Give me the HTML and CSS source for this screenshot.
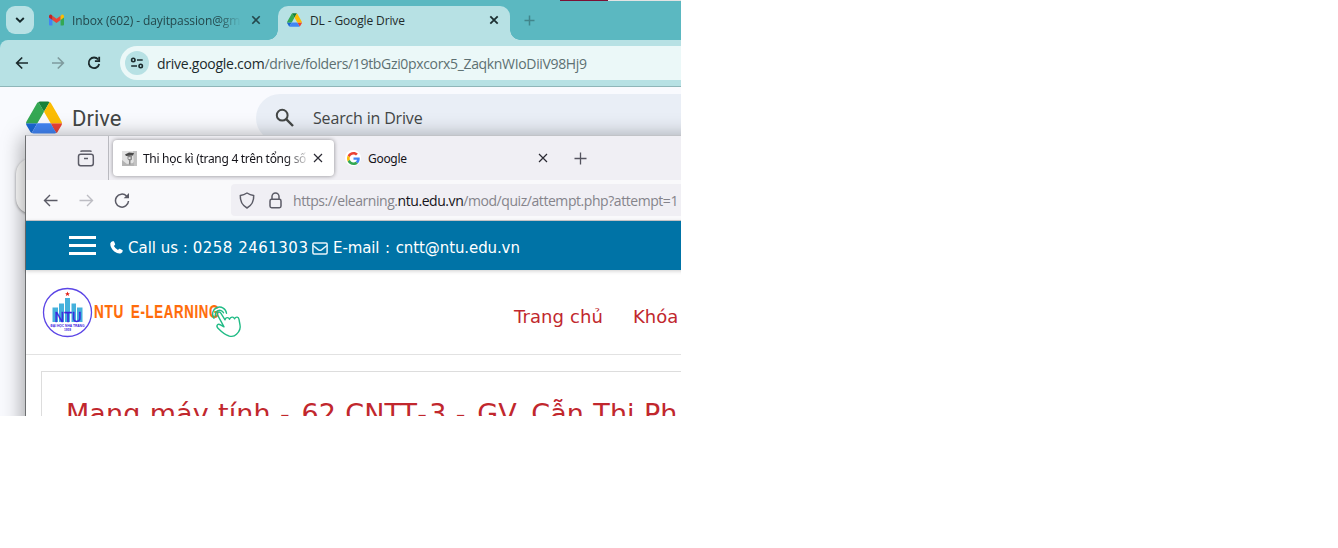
FILE: index.html
```html
<!DOCTYPE html>
<html lang="vi">
<head>
<meta charset="utf-8">
<title>DL - Google Drive</title>
<link rel="stylesheet" href="styles.css">
</head>
<body>
<svg width="0" height="0" class="defs">
  <symbol id="drive-logo" viewBox="0 0 87.3 78">
    <path d="m6.6 66.85 3.85 6.65c.8 1.4 1.95 2.5 3.3 3.3l13.75-23.8h-27.5c0 1.55.4 3.1 1.2 4.5z" fill="#1967d2"/>
    <path d="m43.65 25-13.75-23.8c-1.35.8-2.5 1.9-3.3 3.3l-25.4 44a9.06 9.06 0 0 0 -1.2 4.5h27.5z" fill="#34a853"/>
    <path d="m73.55 76.8c1.35-.8 2.5-1.9 3.3-3.3l1.6-2.75 7.65-13.25c.8-1.4 1.2-2.95 1.2-4.5h-27.5l5.85 11.5z" fill="#ea4335"/>
    <path d="m43.65 25 13.75-23.8c-1.35-.8-2.9-1.2-4.5-1.2h-18.5c-1.6 0-3.15.45-4.5 1.2z" fill="#188038"/>
    <path d="m59.8 53h-32.3l-13.75 23.8c1.35.8 2.9 1.2 4.5 1.2h50.8c1.6 0 3.15-.45 4.5-1.2z" fill="#4285f4"/>
    <path d="m73.4 26.5-12.7-22c-.8-1.4-1.95-2.5-3.3-3.3l-13.75 23.8 16.15 28h27.45c0-1.55-.4-3.1-1.2-4.5z" fill="#fbbc04"/>
  </symbol>
</svg>
<div class="desktop">
  <div class="top-edge"></div>

  <div class="chrome-tabs">
    <div class="tab-search"><svg width="10" height="8" viewBox="0 0 10 8"><path d="M1.200 2 5 5.700 8.800 2" fill="none" stroke="#16292b" stroke-width="1.900"/></svg></div>
    <div class="ctab">
      <svg class="gmail" width="15" height="12" viewBox="0 0 15 12">
        <path d="M0 2.500V10.500q0 1 1 1H3.400V5.200z" fill="#4285f4"/>
        <path d="M11.600 5.200V11.500H14q1 0 1-1V2.500z" fill="#34a853"/>
        <path d="M3.400 1.700V6L7.500 9 11.600 6V1.700L7.500 4.800z" fill="#ea4335"/>
        <path d="M0 2.500V3.600L3.400 6V1.700L2.600 1C1.500 0 0 .8 0 2.500z" fill="#c5221f"/>
        <path d="M15 2.500V3.600L11.600 6V1.700L12.400 1C13.500 0 15 .8 15 2.500z" fill="#fbbc04"/>
      </svg>
      <span class="ctab-title inbox">Inbox (602) - dayitpassion@gm</span>
      <svg class="cx" width="10" height="10" viewBox="0 0 10 10"><path d="M1.300 1.300 8.700 8.700M8.700 1.300 1.300 8.700" stroke="#24484c" stroke-width="1.600"/></svg>
    </div>
    <div class="ctab active">
      <svg class="mini-drive" width="15" height="14"><use href="#drive-logo"/></svg>
      <span class="ctab-title dl">DL - Google Drive</span>
      <svg class="cx" width="10" height="10" viewBox="0 0 10 10"><path d="M1.300 1.300 8.700 8.700M8.700 1.300 1.300 8.700" stroke="#1c2f31" stroke-width="1.800"/></svg>
    </div>
    <svg class="plus" width="11" height="11" viewBox="0 0 11 11"><path d="M5.500 .5V10.500M.5 5.500H10.500" stroke="#41858b" stroke-width="1.500"/></svg>
  </div>

  <div class="chrome-bar">
    <svg class="c-back" width="14" height="14" viewBox="0 0 14 14"><path d="M13 7H2M7.200 1.500 1.700 7l5.500 5.500" fill="none" stroke="#1b2a2c" stroke-width="1.700"/></svg>
    <svg class="c-fwd" width="14" height="14" viewBox="0 0 14 14"><path d="M1 7H12M6.800 1.500 12.300 7l-5.500 5.500" fill="none" stroke="#7f9b9e" stroke-width="1.700"/></svg>
    <svg class="c-reload" width="14" height="14" viewBox="0 0 14 14"><path d="M11.200 3.500A5.300 5.300 0 1 0 12.200 8" fill="none" stroke="#1b2a2c" stroke-width="1.800"/><path d="M12.200 .8V5.100H7.900" fill="none" stroke="#1b2a2c" stroke-width="1.800"/></svg>
    <div class="omnibox">
      <div class="site-info"><svg width="14" height="12" viewBox="0 0 14 12" fill="none" stroke="#1b2a2c" stroke-width="1.600"><circle cx="3.300" cy="3" r="1.700"/><path d="M7 3H12.700M1.200 9H7"/><circle cx="10.700" cy="9" r="1.700"/></svg></div>
      <span class="c-url"><b>drive.google.com</b>/drive/folders/19tbGzi0pxcorx5_ZaqknWIoDiiV98Hj9</span>
    </div>
  </div>

  <div class="drive-page">
    <svg class="big-drive" width="36" height="33"><use href="#drive-logo"/></svg>
    <span class="drive-name">Drive</span>
    <div class="drive-search">
      <svg width="20" height="20" viewBox="0 0 20 20" fill="none" stroke="#444746"><circle cx="7.200" cy="7.200" r="5.400" stroke-width="2"/><path d="M11.200 11.200 18 18" stroke-width="2.400"/></svg>
      <span>Search in Drive</span>
    </div>
    <div class="new-button"></div>
  </div>

  <div class="firefox">
    <div class="ff-tabs">
      <div class="ff-view">
        <svg width="18" height="17" viewBox="0 0 18 17" fill="none" stroke="#5b5b66" stroke-width="1.500"><path d="M3.500 1.700Q4 .9 5 .9H13Q14 .9 14.500 1.700" /><rect x="1.500" y="4.200" width="14.800" height="11.500" rx="2.200"/><path d="M7 8.500H11"/></svg>
      </div>
      <div class="ff-tab selected">
        <svg width="15" height="15" viewBox="0 0 15 15"><rect width="15" height="15" fill="#e2e2e2"/><path d="M0 9 5 13 11 12 15 5V15H0z" fill="#b4b4b4"/><path d="M11 0H15V15H12z" fill="#c3c3c3"/><path d="M3 3.500 7 1.500 12 2 11 4.500 4 5z" fill="#4a4a4a"/><path d="M5.500 5H10V8.500L8.500 9.500V13.500H7V9.500L5.500 8z" fill="#888"/><path d="M6.500 6.200H8.500V8H6.500z" fill="#e6e6e6"/></svg>
        <span class="ff-title quiz">Thi học kì (trang 4 trên tổng số 5</span>
        <svg class="fx" width="10" height="10" viewBox="0 0 10 10"><path d="M1 1 9 9M9 1 1 9" stroke="#2b2a33" stroke-width="1.200"/></svg>
      </div>
      <div class="ff-tab second">
        <div class="g-badge"><svg width="13" height="13" viewBox="0 0 48 48"><path fill="#EA4335" d="M24 9.500c3.540 0 6.710 1.220 9.210 3.600l6.850-6.850C35.900 2.380 30.470 0 24 0 14.620 0 6.510 5.380 2.560 13.220l7.980 6.190C12.430 13.720 17.740 9.500 24 9.500z"/><path fill="#4285F4" d="M46.980 24.550c0-1.570-.15-3.090-.38-4.550H24v9.020h12.940c-.58 2.960-2.260 5.480-4.780 7.180l7.730 6c4.510-4.180 7.090-10.360 7.090-17.650z"/><path fill="#FBBC05" d="M10.530 28.590c-.48-1.450-.76-2.990-.76-4.590s.27-3.140.76-4.590l-7.980-6.190C.92 16.460 0 20.120 0 24c0 3.880.92 7.540 2.560 10.780l7.970-6.190z"/><path fill="#34A853" d="M24 48c6.480 0 11.930-2.130 15.890-5.810l-7.730-6c-2.150 1.450-4.920 2.300-8.160 2.300-6.260 0-11.570-4.220-13.470-9.910l-7.980 6.190C6.510 42.620 14.620 48 24 48z"/></svg></div>
        <span class="ff-title goog">Google</span>
        <svg class="fx" width="10" height="10" viewBox="0 0 10 10"><path d="M1 1 9 9M9 1 1 9" stroke="#2b2a33" stroke-width="1.200"/></svg>
      </div>
      <svg class="fplus" width="13" height="13" viewBox="0 0 13 13"><path d="M6.500 .5V12.500M.5 6.500H12.500" stroke="#55545f" stroke-width="1.300"/></svg>
    </div>
    <div class="ff-bar">
      <svg class="f-back" width="15" height="13" viewBox="0 0 15 13"><path d="M14.500 6.500H1.500M7 1 1.500 6.500 7 12" fill="none" stroke="#5b5b66" stroke-width="1.400"/></svg>
      <svg class="f-fwd" width="15" height="13" viewBox="0 0 15 13"><path d="M.5 6.500H13.500M8 1 13.500 6.500 8 12" fill="none" stroke="#bdbdc3" stroke-width="1.400"/></svg>
      <svg class="f-reload" width="16" height="16" viewBox="0 0 16 16"><path d="M12.600 4A6.500 6.500 0 1 0 14.500 9" fill="none" stroke="#5b5b66" stroke-width="1.500"/><path d="M15 1V6.300H9.700z" fill="#5b5b66"/></svg>
      <div class="ff-url">
        <svg width="16" height="17" viewBox="0 0 16 17"><path d="M8 1Q11 3 14.700 3.400 15.200 12 8 16 .8 12 1.300 3.400 5 3 8 1z" fill="none" stroke="#5b5b66" stroke-width="1.500" stroke-linejoin="round"/></svg>
        <svg class="lock" width="13" height="17" viewBox="0 0 13 17" fill="none" stroke="#5b5b66" stroke-width="1.500"><rect x="1" y="7.300" width="11" height="8.400" rx="1.600"/><path d="M3 7V4.500a3.500 3.500 0 0 1 7 0V7"/></svg>
        <span class="f-url">https://elearning.<b>ntu.edu.vn</b>/mod/quiz/attempt.php?attempt=1</span>
      </div>
    </div>
    <div class="contact">
      <div class="burger"><i></i><i></i><i></i></div>
      <svg class="phone" width="13" height="13" viewBox="0 0 13 13"><path d="M.3 2.600Q.8 .5 2.600 .2L3.900 .3 5.200 3.300Q5.200 4 3.900 5 5 7.400 8 9 9.200 7.500 9.900 7.700L12.700 9.300Q12.900 11.500 11 12.200 8.300 13.400 4.300 10.400 .1 6.800 .3 2.600z" fill="#fff"/></svg>
      <span class="call">Call us : <b class="digits">0258 2461303</b></span>
      <svg class="mail" width="16" height="13" viewBox="0 0 16 13" fill="none" stroke="#e8f4f9" stroke-width="1.500"><rect x=".9" y=".9" width="14.200" height="11" rx="1.200"/><path d="M1 3.500 6.500 7.800Q8 8.700 9.500 7.800L15 3.500"/></svg>
      <span class="email">E-mail : cntt@ntu.edu.vn</span>
    </div>
    <div class="site-head">
      <svg class="brand" width="202" height="54" viewBox="0 0 202 54">
        <circle cx="25.500" cy="26.500" r="24" fill="#fff" stroke="#5b45e6" stroke-width="1.300"/>
        <path d="M10.500 36V21.500H16V36zM17 36V17.500H22V36zM23 36V12H28V36zM29.500 36V17.500H34V36zM35 36V21.500H40.500V36z" fill="#45b1dc"/>
        <path d="M25.500 5.500 26.200 7.200H28L26.600 8.300 27.200 10 25.500 9 23.800 10 24.400 8.300 23 7.200H24.800z" fill="#e2231a"/>
        <text x="12.500" y="35.800" class="seal-ntu" textLength="27" lengthAdjust="spacingAndGlyphs">NTU</text>
        <text x="8.500" y="41" class="seal-name" textLength="34" lengthAdjust="spacingAndGlyphs">ĐẠI HỌC NHA TRANG</text>
        <text x="22" y="45" class="seal-year" textLength="7" lengthAdjust="spacingAndGlyphs">1959</text>
        <text x="52" y="32" class="brand-name" textLength="30" lengthAdjust="spacingAndGlyphs">NTU</text>
        <text x="89" y="32" class="brand-name" textLength="89" lengthAdjust="spacingAndGlyphs">E-LEARNING</text>
        <g fill="none" stroke="#20bb85" stroke-width="1.400" stroke-linecap="round" stroke-linejoin="round" transform="translate(-.5 -1.200)">
          <path d="M187 51C183 50 179 46 176.500 43.500 174 40.500 176.500 38.500 179 40L182.500 42 176 30C175 27.500 178 26 179.500 28.500L183.500 35C184 32.500 187 32 188 34.500 189 32 192 31.500 193 34 194.500 31.500 197 32 197.500 34.500L198.500 40C199.500 44 197.500 47 195 49.500 193 51.500 190 52 187 51z"/>
          <path d="M174.200 31.500A4.200 4.200 0 1 1 182 28M172.500 33.500A7 7 0 1 1 185 28.500"/>
        </g>
      </svg>
      <span class="nav home">Trang chủ</span>
      <span class="nav course">Khóa</span>
    </div>
    <div class="course-card"><h1>Mạng máy tính <i>-</i> 62 CNTT<i>-</i>3 <i>-</i> GV. Cẫn Thị Ph</h1></div>
  </div>
</div>
</body>
</html>
```

FILE: styles.css
```css
* { box-sizing: border-box; }
body { margin: 0; background: #fff; font-family: "Open Sans", "Noto Sans", sans-serif; }
svg { display: block; flex: none; }
.defs { position: absolute; }
span, h1 { white-space: nowrap; flex: none; }
b { font-weight: 400; }

.desktop { position: relative; width: 681px; height: 416px; overflow: hidden; background: #f9fafe; }
.top-edge { position: absolute; left: 560px; top: 0; width: 121px; height: 1px; background: linear-gradient(90deg, #7c1034 48px, #e3e3e3 48px); }

.chrome-tabs { display: flex; height: 40px; background: #5bb8c1; }
.tab-search { display: flex; align-items: center; justify-content: center; width: 28px; height: 28px; margin: 6px 0 0 6px; border-radius: 9px; background: #b7e1e4; flex: none; }
.ctab { display: flex; align-items: center; width: 234px; margin-left: 10px; height: 40px; flex: none; }
.gmail { margin-left: 5px; }
.ctab-title { font-size: 12px; }
.inbox { width: 170px; margin: 1px 9px 0 8px; color: #24484c; letter-spacing: -0.1px; -webkit-mask-image: linear-gradient(90deg, #000 146px, transparent 169px); mask-image: linear-gradient(90deg, #000 146px, transparent 169px); }
.ctab.active { position: relative; width: 232px; height: 34px; margin: 6px 0 0; padding-bottom: 6px; border-radius: 10px 10px 0 0; background: #b7e1e4; }
.ctab.active::before, .ctab.active::after { content: ""; position: absolute; bottom: 0; width: 10px; height: 10px; }
.ctab.active::before { left: -10px; background: radial-gradient(circle at 0 0, transparent 9.500px, #b7e1e4 10px); }
.ctab.active::after { right: -10px; background: radial-gradient(circle at 100% 0, transparent 9.500px, #b7e1e4 10px); }
.mini-drive { margin-left: 9px; }
.dl { width: 170px; margin: 1px 9px 0 8px; color: #1f2b2c; letter-spacing: -0.13px; }
.plus { margin: 15px 0 0 14px; }

.chrome-bar { position: relative; display: flex; align-items: center; height: 47px; border-bottom: 1px solid #8fb6b9; background: linear-gradient(#5bb8c1, #5bb8c1) 0 0 / 8px 8px no-repeat, #b7e1e4; }
.chrome-bar::before { content: ""; position: absolute; left: 0; top: 0; width: 8px; height: 8px; border-radius: 8px 0 0; background: #b7e1e4; }
.c-back { margin-left: 15px; }
.c-fwd { margin-left: 22px; }
.c-reload { margin-left: 22px; }
.omnibox { display: flex; align-items: center; height: 34px; width: 561px; margin-left: 19px; padding-left: 5px; border-radius: 17px 0 0 17px; background: #ebf8f8; }
.site-info { display: flex; align-items: center; justify-content: center; width: 24px; height: 24px; border-radius: 50%; background: #b7e1e4; flex: none; }
.c-url { margin-left: 8px; font-size: 14px; color: #5d7072; letter-spacing: -0.34px; }
.c-url b { color: #1b2a2c; letter-spacing: -0.26px; }

.drive-page { display: flex; height: 329px; position: relative; }
.big-drive { margin: 14px 0 0 26px; }
.drive-name { margin: 15px 0 0 10px; width: 184px; font: 22px/34px Roboto, sans-serif; color: #444746; }
.drive-search { display: flex; align-items: center; width: 430px; height: 48px; margin-top: 7px; padding-left: 19px; border-radius: 24px 0 0 24px; background: #e9eef6; flex: none; }
.drive-search span { margin-left: 18px; font: 16px/24px "Open Sans", sans-serif; color: #444746; letter-spacing: -0.17px; }
.new-button { position: absolute; left: 16px; top: 71px; width: 110px; height: 56px; border-radius: 16px; background: #fff; box-shadow: 0 1px 3px rgba(0,0,0,.4); }

.firefox { position: absolute; left: 25px; top: 135px; width: 900px; height: 500px; border: 1px solid #6c6e70; border-top-color: #c1c3c7; background: #fff; box-shadow: 0 4px 20px 2px rgba(0,0,0,.36); }
.ff-tabs { display: flex; height: 44px; background: #f0eff4; }
.ff-view { width: 83px; border-right: 1px solid #babac0; padding: 14px 0 0 51px; flex: none; }
.ff-tab { display: flex; align-items: center; height: 36px; margin-top: 4px; flex: none; }
.ff-tab.selected { width: 221px; margin-left: 4px; padding-left: 9px; border-radius: 4px; background: #fff; box-shadow: 0 0 4px rgba(0,0,0,.42); }
.ff-title { font: 12px/18px "Noto Sans", sans-serif; color: #15141a; }
.quiz { width: 166px; margin: 1px 4px 0 6px; letter-spacing: -0.3px; -webkit-mask-image: linear-gradient(90deg, #000 142px, transparent 168px); mask-image: linear-gradient(90deg, #000 142px, transparent 168px); }
.ff-tab.second { width: 225px; padding-left: 11px; }
.g-badge { display: flex; align-items: center; justify-content: center; width: 16px; height: 16px; border-radius: 50%; background: #fff; flex: none; }
.goog { width: 162px; margin: 1px 8px 0 7px; letter-spacing: -0.3px; }
.fplus { margin: 16px 0 0 15px; }
.ff-bar { display: flex; align-items: center; height: 41px; background: #f9f9fb; border-bottom: 1px solid #cccccf; }
.f-back { margin-left: 17px; }
.f-fwd { margin-left: 21px; }
.f-reload { margin-left: 20px; }
.ff-url { display: flex; align-items: center; width: 700px; height: 32px; margin-left: 101px; padding-left: 8px; border-radius: 4px; background: #f0eff4; flex: none; }
.lock { margin-left: 14px; }
.f-url { margin: 2px 0 0 11px; font: 14px/20px "Open Sans", sans-serif; color: #85848b; letter-spacing: -0.44px; }
.f-url b { color: #15141a; }

.contact { position: relative; display: flex; height: 49px; background: #0073a6; color: #fff; box-shadow: 0 1px 4px rgba(0,0,0,.2); font: 15px/20px "DejaVu Sans", sans-serif; }
.burger { display: flex; flex-direction: column; justify-content: space-between; width: 27px; height: 19px; margin: 15px 0 0 43px; flex: none; }
.burger i { height: 3px; background: #fff; }
.phone { margin: 20px 0 0 14px; }
.call { width: 180px; margin: 17px 0 0 5px; }
.digits { letter-spacing: .5px; }
.mail { margin: 21px 0 0 4px; }
.email { margin: 17px 0 0 5px; letter-spacing: -0.1px; word-spacing: 1px; }

.site-head { display: flex; height: 85px; border-bottom: 1px solid #e2e2e2; }
.brand { margin: 16px 0 0 16px; }
.seal-ntu { font: 14px "Liberation Sans", sans-serif; fill: #3b22e0; stroke: #3b22e0; stroke-width: .3px; }
.seal-name { font: bold 3.600px "Liberation Sans", sans-serif; fill: #3b22e0; }
.seal-year { font: bold 3.300px "Liberation Sans", sans-serif; fill: #3b22e0; }
.brand-name { font: bold 18.500px "Liberation Sans", sans-serif; letter-spacing: 1px; fill: #ff6c0a; stroke: #ff6c0a; stroke-width: .2px; }
.nav { margin-top: 35px; font: 18px/24px "DejaVu Sans", sans-serif; color: #c1272d; }
.home { margin-left: 270px; width: 89px; letter-spacing: .1px; }
.course { margin-left: 30px; }
.course-card { height: 200px; margin: 16px 0 0 15px; padding: 24px; border: 1px solid #ddd; }
.course-card h1 { margin: 0; font: 400 27px/36px "DejaVu Sans", sans-serif; color: #c1272d; letter-spacing: .07px; word-spacing: .7px; }
.course-card h1 i { font-style: normal; letter-spacing: 2.300px; }
```
